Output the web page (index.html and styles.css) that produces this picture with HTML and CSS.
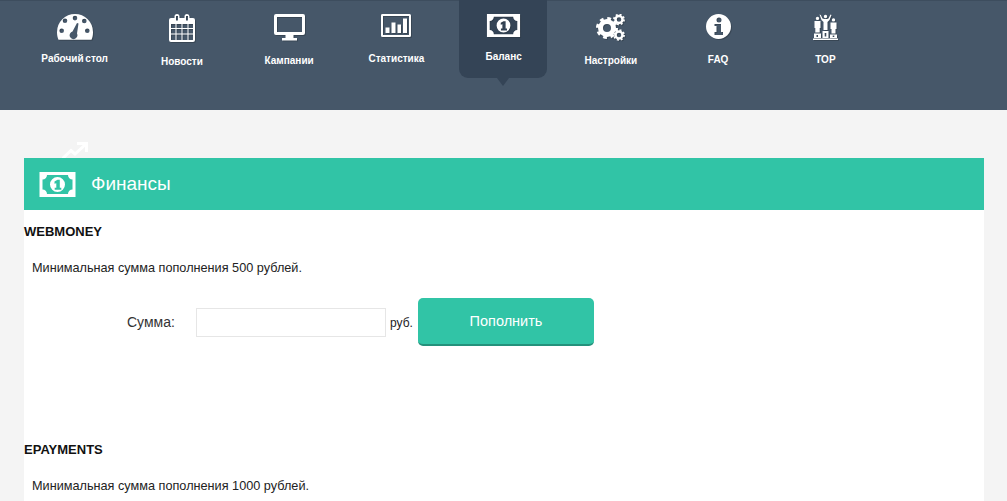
FILE: index.html
```html
<!DOCTYPE html>
<html lang="ru">
<head>
<meta charset="utf-8">
<title>Финансы</title>
<link rel="stylesheet" href="styles.css">
</head>
<body>
<svg class="defs" width="0" height="0" aria-hidden="true">
  <symbol id="money" viewBox="0 0 36 25">
    <path fill="currentColor" fill-rule="evenodd" d="M0 0H36V25H0ZM7.500 3H28.500A4.500 4.500 0 0 0 33 7.500V17.500A4.500 4.500 0 0 0 28.500 22H7.500A4.500 4.500 0 0 0 3 17.500V7.500A4.500 4.500 0 0 0 7.500 3ZM18 5A7.500 7.500 0 1 1 18 20 7.500 7.500 0 1 1 18 5ZM15 9.500 18 7.800H20.300V15.700H21.800V17.800H15.200V15.700H16.800V11.200L15 11.800Z"/>
  </symbol>
</svg>
<header class="topbar">
  <nav class="menu">
    <a class="item">
      <svg class="icon gauge" viewBox="0 0 36 26"><path fill="#fff" fill-rule="evenodd" d="M1.500 25.800C.500 23.500 0 21 0 18A18 18 0 0 1 36 18C36 21 35.500 23.500 34.500 25.800ZM18 1.800A2.300 2.300 0 1 0 18 6.400 2.300 2.300 0 1 0 18 1.800ZM8 4.400A2.300 2.300 0 1 0 8 9 2.300 2.300 0 1 0 8 4.400ZM27.300 4.700A2.300 2.300 0 1 0 27.300 9.300 2.300 2.300 0 1 0 27.300 4.700ZM4.700 14.400A2.300 2.300 0 1 0 4.700 19 2.300 2.300 0 1 0 4.700 14.400ZM30.300 14.400A2.300 2.300 0 1 0 30.300 19 2.300 2.300 0 1 0 30.300 14.400Z"/><path fill="#465769" d="M20 9 21.500 9.500 20 19.500A3.900 3.900 0 1 1 15.500 17.500Z"/></svg>
      <span class="label">Рабочий стол</span>
    </a>
    <a class="item">
      <svg class="icon calendar" viewBox="0 0 26 28"><path fill="#fff" fill-rule="evenodd" d="M2 4H5.500V2.500A2.500 2.500 0 0 1 10.500 2.500V4H15.500V2.500A2.500 2.500 0 0 1 20.500 2.500V4H24A2 2 0 0 1 26 6V26A2 2 0 0 1 24 28H2A2 2 0 0 1 0 26V6A2 2 0 0 1 2 4ZM7 2V6.500H9V2ZM17 2V6.500H19V2ZM2 10V14H6.500V10ZM7.500 10V14H12.500V10ZM13.500 10V14H18.500V10ZM19.500 10V14H24V10ZM2 15V19.500H6.500V15ZM7.500 15V19.500H12.500V15ZM13.500 15V19.500H18.500V15ZM19.500 15V19.500H24V15ZM2 20.500V26H6.500V20.500ZM7.500 20.500V26H12.500V20.500ZM13.500 20.500V26H18.500V20.500ZM19.500 20.500V26H24V20.500Z"/></svg>
      <span class="label">Новости</span>
    </a>
    <a class="item">
      <svg class="icon monitor" viewBox="0 0 31 27"><path fill="#fff" fill-rule="evenodd" d="M2 0H29A2 2 0 0 1 31 2V19A2 2 0 0 1 29 21H19.500V24H23V26.500H8V24H11.500V21H2A2 2 0 0 1 0 19V2A2 2 0 0 1 2 0ZM3 3V18H28V3Z"/></svg>
      <span class="label">Кампании</span>
    </a>
    <a class="item">
      <svg class="icon stats" viewBox="0 0 30 23"><path fill="#fff" fill-rule="evenodd" d="M1.500 0H28.500A1.500 1.500 0 0 1 30 1.500V21.500A1.500 1.500 0 0 1 28.500 23H1.500A1.500 1.500 0 0 1 0 21.500V1.500A1.500 1.500 0 0 1 1.500 0ZM2 2V21H28V2ZM4.500 13.500H8.500V19H4.500ZM10.500 8.500H14.500V19H10.500ZM16.500 10.500H20V19H16.500ZM22 4.500H26V19H22Z"/></svg>
      <span class="label">Статистика</span>
    </a>
    <a class="item active">
      <svg class="icon cash"><use href="#money"/></svg>
      <span class="label">Баланс</span>
    </a>
    <a class="item">
      <svg class="icon gears" viewBox="0 0 29 27"><g fill="none" stroke="#fff"><circle cx="11" cy="14" r="6.500" stroke-width="5"/><circle cx="11" cy="14" r="9.500" stroke-width="3" stroke-dasharray="3.730 3.730"/><circle cx="23" cy="5.500" r="3.500" stroke-width="2.500"/><circle cx="23" cy="5.500" r="5" stroke-width="1.800" stroke-dasharray="1.960 1.960"/><circle cx="23" cy="21" r="3.500" stroke-width="2.500"/><circle cx="23" cy="21" r="5" stroke-width="1.800" stroke-dasharray="1.960 1.960"/></g></svg>
      <span class="label">Настройки</span>
    </a>
    <a class="item">
      <svg class="icon info" viewBox="0 0 25 25"><path fill="#fff" fill-rule="evenodd" d="M12.500 0A12.500 12.500 0 1 1 12.500 25 12.500 12.500 0 1 1 12.500 0ZM13 3.500A2.500 2.500 0 1 0 13 8.500 2.500 2.500 0 1 0 13 3.500ZM8.500 10V12H10.500V18H8.500V21H17V18H15V10Z"/></svg>
      <span class="label">FAQ</span>
    </a>
    <a class="item">
      <svg class="icon podium" viewBox="0 0 25 26"><path fill="#fff" fill-rule="evenodd" d="M12.500 .800A1.700 1.700 0 1 1 12.500 4.200 1.700 1.700 0 1 1 12.500 .800ZM6.500 .500 7.800 1 9.500 4.500 11 5H14L15.500 4.500 17.500 .500 18.500 1 16.500 6 14.500 8V16H10.500V8L8.500 6ZM4.500 2.700A1.700 1.700 0 1 1 4.500 6.100 1.700 1.700 0 1 1 4.500 2.700ZM20.500 4.200A1.700 1.700 0 1 1 20.500 7.600 1.700 1.700 0 1 1 20.500 4.200ZM1.500 7H7.500V14H6.700V18.500H2.300V14H1.500ZM17.500 8.500H23.500V15H22.500V19.500H18.500V15H17.500ZM1 19.500H8V24H1ZM9.500 17H15.500V24H9.500ZM17 20.500H24V24H17ZM0 24.500H25V26H0ZM3.500 21V23H5V21ZM11.700 19V22.500H13.300V19ZM19.700 21.500V23H21.300V21.500Z"/></svg>
      <span class="label">TOP</span>
    </a>
  </nav>
</header>

<main class="page">
  <svg class="trend" viewBox="0 0 26 16"><g fill="none" stroke="#fff" stroke-width="3"><path d="M-1 18 9 8.500 13 12 23.500 2.500"/><path d="M15 1.500H24.500V10"/></g></svg>
  <div class="panel">
    <h1 class="panel-title">
      <svg class="title-icon"><use href="#money"/></svg>
      <span>Финансы</span>
    </h1>

    <section class="pay first">
      <h2 class="pay-name">WEBMONEY</h2>
      <p class="pay-note">Минимальная сумма пополнения 500 рублей.</p>
      <form class="pay-form">
        <label class="sum-label" for="wm">Сумма:</label>
        <input class="sum-input" id="wm" type="text">
        <span class="unit">руб.</span>
        <button class="submit" type="button">Пополнить</button>
      </form>
    </section>

    <section class="pay">
      <h2 class="pay-name">EPAYMENTS</h2>
      <p class="pay-note">Минимальная сумма пополнения 1000 рублей.</p>
    </section>
  </div>
</main>
</body>
</html>
```

FILE: styles.css
```css
* { box-sizing: border-box; }

html, body {
  margin: 0;
  height: 501px;
  overflow: hidden;
}

body {
  background: #f4f4f4;
  color: #222;
  font-family: "Liberation Sans", Arial, sans-serif;
}

.defs { position: absolute; }

.topbar {
  height: 110px;
  background: #465769;
  border-top: 1px solid #3d4d5e;
}

.menu {
  display: flex;
  padding-left: 21px;
  height: 100%;
}

.item {
  position: relative;
  width: 107.25px;
  display: flex;
  flex-direction: column;
  align-items: center;
  padding-top: 13px;
  color: #fff;
}

.item.active::before {
  content: "";
  position: absolute;
  top: -1px;
  left: 9px;
  width: 88px;
  height: 78px;
  background: #344456;
  border-radius: 0 0 9px 9px;
}

.item.active::after {
  content: "";
  position: absolute;
  top: 77px;
  left: 47px;
  border: 8px solid transparent;
  border-top-color: #344456;
  border-bottom-width: 0;
  border-left-width: 6px;
  border-right-width: 6px;
}

.icon {
  position: relative;
  display: block;
  filter: drop-shadow(1px 1px 0 rgba(40, 50, 60, .45));
}

.gauge { width: 36px; height: 26px; margin-bottom: 13px; }
.calendar { width: 26px; height: 28px; margin-bottom: 14px; }
.monitor { width: 31px; height: 27px; margin-bottom: 14px; }
.stats { width: 30px; height: 23px; margin-bottom: 16px; }
.cash { width: 35px; height: 23px; margin-bottom: 14px; color: #fff; }
.gears { width: 29px; height: 27px; margin-bottom: 14px; }
.info { width: 25px; height: 25px; margin-bottom: 15px; }
.podium { width: 25px; height: 26px; margin-bottom: 14px; }

.label {
  position: relative;
  font-size: 10px;
  font-weight: 700;
  line-height: 12px;
  word-spacing: -1px;
  white-space: nowrap;
}

.page {
  position: relative;
  padding: 48px 23px 0 24px;
}

.trend {
  position: absolute;
  top: 32px;
  left: 62px;
  width: 26px;
  height: 16px;
}

.panel {
  background: #fff;
  height: 400px;
}

.panel-title {
  display: flex;
  align-items: center;
  gap: 15px;
  height: 52px;
  margin: 0;
  padding-left: 15px;
  background: #31c4a6;
  color: #fff;
  font-size: 19px;
  font-weight: 400;
}

.title-icon { width: 37px; height: 25px; color: #fff; }

.pay.first { height: 218px; }

.pay-name {
  margin: 0;
  padding-top: 14px;
  font-size: 13px;
  line-height: 16px;
  font-weight: 700;
  color: #111;
}

.pay-note {
  margin: 0;
  padding: 21px 0 0 8px;
  font-size: 12.7px;
  line-height: 14px;
}

.pay-form {
  display: flex;
  align-items: flex-start;
  margin-top: 23px;
  padding-left: 103px;
}

.sum-label {
  width: 69px;
  padding-top: 16px;
  font-size: 14px;
  line-height: 16px;
  color: #333;
}

.sum-input {
  width: 190px;
  height: 29px;
  margin: 10px 0 0;
  border: 1px solid #e6e6e6;
  background: #fff;
  padding: 0 6px;
}

.unit {
  padding: 18px 0 0 4px;
  width: 32px;
  font-size: 12px;
  line-height: 14px;
}

.submit {
  width: 176px;
  height: 48px;
  border: 0;
  border-bottom: 2px solid #24917b;
  border-radius: 5px;
  background: #31c4a6;
  color: #fff;
  font: 400 14.5px "Liberation Sans", Arial, sans-serif;
}
```
